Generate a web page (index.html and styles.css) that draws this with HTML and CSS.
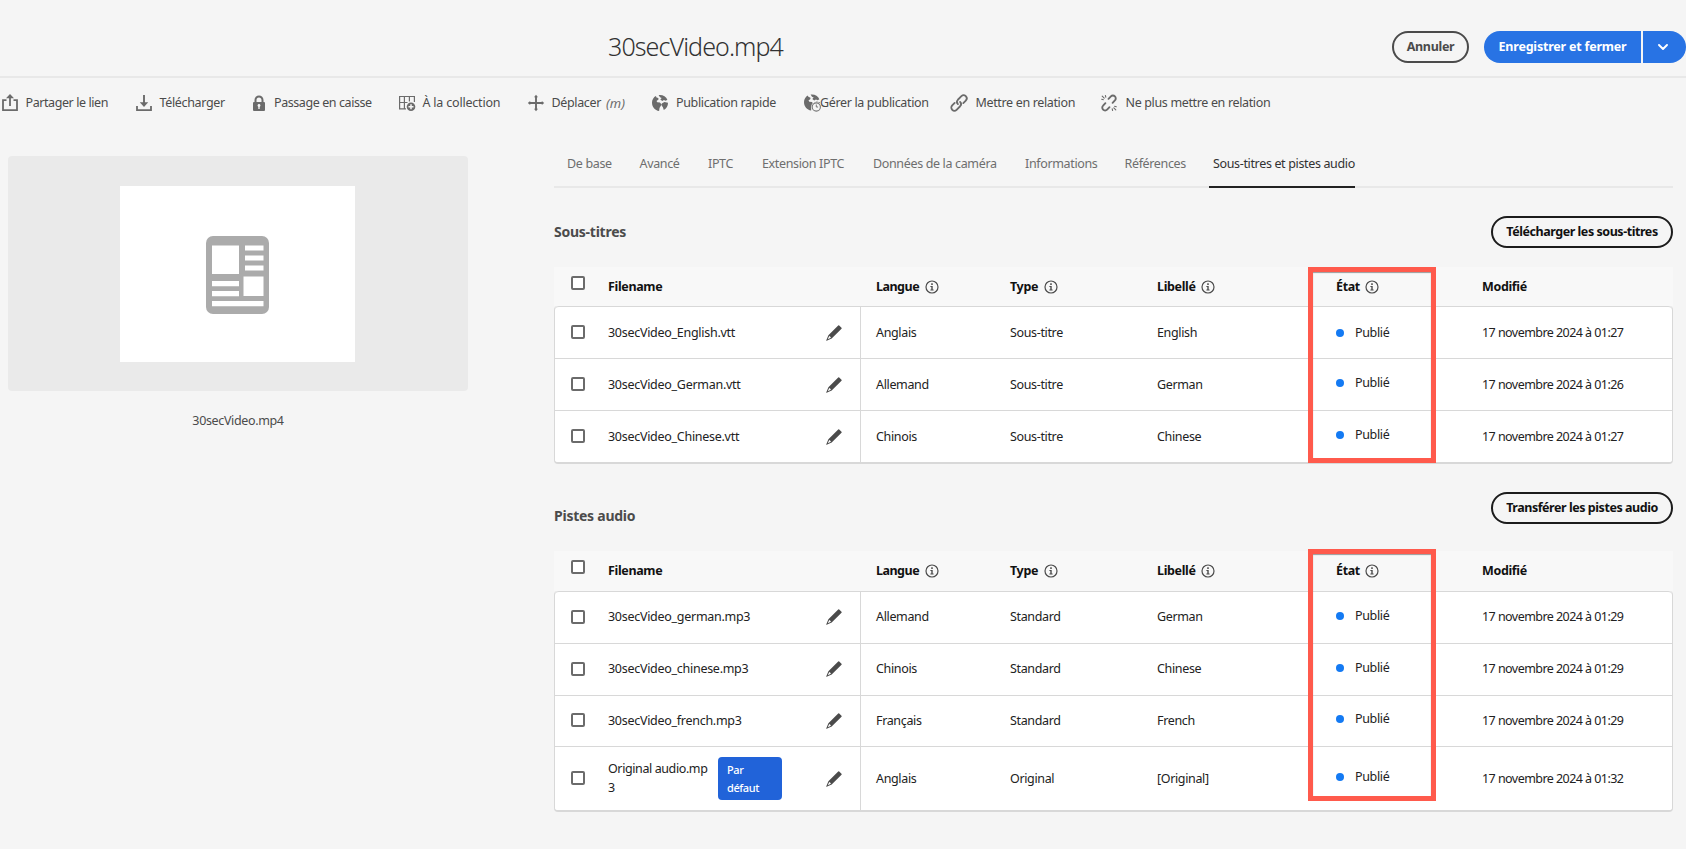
FILE: index.html
```html
<!DOCTYPE html>
<html lang="fr">
<head>
<meta charset="utf-8">
<title>30secVideo.mp4</title>
<link rel="stylesheet" href="styles.css">
</head>
<body>
<svg class="defs" aria-hidden="true">
  <symbol id="info" viewBox="0 0 14 14"><circle cx="7" cy="7" r="6" fill="none" stroke="#4b4b4b" stroke-width="1.2"/><rect x="6.1" y="3.2" width="1.8" height="1.7" rx=".6" fill="#4b4b4b"/><path d="M5.4 6.1h2.3v3.4h.9v1H5.4v-1h.9V7.1h-.9z" fill="#4b4b4b"/></symbol>
  <symbol id="pencil" viewBox="0 0 16 16"><path fill="#4b4b4b" d="M12.2.5q.5-.5 1 0l2.3 2.3q.5.5 0 1L5.7 13.5.6 15.8q-.5.1-.4-.4l2.2-5.1zM3.2 11.1 1.8 14.2l3.1-1.4q-.2-1.3-1.7-1.7z"/></symbol>
  <symbol id="earth" viewBox="0 0 18 18"><path fill="#6b6b6b" d="M1 8.500C1 5.600 2.600 3 4.900 1.900l.6 1.700 1.800.3.200 1.600-2 1.500.8 1.200 2.600.3 1.700 1.900-1.200 2.200-.9 1.500-.4 2.900C4 16.500 1 13 1 8.500zM7.600 1.100C11.600.500 15 2.600 16.400 5.700l-1.700 1-1.800-.6-1.600 1-2-1.500 1.400-1.500-1.700-.8zM10.800 9.400l2.600-1.400 3.600.8c.1 3-1.500 5.800-4.200 7.200l-.9-2.800-1.300-1.600z"/></symbol>
</svg>

<header class="header">
  <h1 class="title">30secVideo.mp4</h1>
  <div class="actions">
    <button class="btn btn-cancel">Annuler</button>
    <div class="split">
      <button class="split-main">Enregistrer et fermer</button>
      <button class="split-more" aria-label="Plus"><svg width="10" height="7" viewBox="0 0 10 7"><path d="M1 1l4 4 4-4" fill="none" stroke="#fff" stroke-width="1.9" stroke-linecap="round" stroke-linejoin="round"/></svg></button>
    </div>
  </div>
</header>

<nav class="toolbar">
  <a class="tool share"><svg viewBox="0 0 18 18"><path d="M5.5 6.2H2v10h14v-10h-3.5" fill="none" stroke="#6b6b6b" stroke-width="1.8"/><path d="M9 2v10" stroke="#6b6b6b" stroke-width="1.8"/><path d="M9 0l4 4.3H5z" fill="#6b6b6b"/></svg><span>Partager le lien</span></a>
  <a class="tool download"><svg viewBox="0 0 18 18"><path d="M2 12v4.2h14V12" fill="none" stroke="#6b6b6b" stroke-width="1.8"/><path d="M9 1v8" stroke="#6b6b6b" stroke-width="1.9"/><path d="M9 13L4.8 8.3h8.4z" fill="#6b6b6b"/></svg><span>Télécharger</span></a>
  <a class="tool lock"><svg viewBox="0 0 18 18"><path d="M5.5 9V6a3.5 3.6 0 0 1 7 0v3" fill="none" stroke="#6b6b6b" stroke-width="2"/><rect x="3" y="8" width="12" height="9" rx="1" fill="#6b6b6b"/><circle cx="9" cy="11.5" r="1.4" fill="#f5f5f5"/><path d="M8.3 12h1.4v3H8.3z" fill="#f5f5f5"/></svg><span>Passage en caisse</span></a>
  <a class="tool collection"><svg viewBox="0 0 18 18"><path d="M8 14.8H1.6V2.5h14.8V8M1.6 8.5h8M6.4 2.5v12.3M11.4 2.5v5" fill="none" stroke="#6b6b6b" stroke-width="1.2"/><circle cx="13" cy="12.7" r="5.2" fill="#f5f5f5"/><circle cx="13" cy="12.7" r="4.3" fill="#6b6b6b"/><path d="M13 10.2v5M10.5 12.7h5" stroke="#f5f5f5" stroke-width="1.5"/></svg><span>À la collection</span></a>
  <a class="tool move"><svg viewBox="0 0 18 18"><path d="M9 2v14M2 9h14" stroke="#6b6b6b" stroke-width="1.9"/><path d="M9 .8l2 2.4H7zM9 17.2l2-2.4H7zM.8 9l2.4-2v4zM17.2 9l-2.4-2v4z" fill="#6b6b6b"/></svg><span>Déplacer</span><i>(m)</i></a>
  <a class="tool globe"><svg viewBox="0 0 18 18"><use href="#earth"/></svg><span>Publication rapide</span></a>
  <a class="tool globe-clock"><svg viewBox="0 0 18 18"><use href="#earth" x="0" y="-.5"/><circle cx="13.3" cy="13" r="5.2" fill="#f5f5f5"/><circle cx="13.3" cy="13" r="4.1" fill="#f5f5f5" stroke="#777" stroke-width="1.1"/><path d="M13.300 10.500V13h1.800" fill="none" stroke="#777"/></svg><span>Gérer la publication</span></a>
  <a class="tool link"><svg viewBox="0 0 18 18"><g transform="rotate(-45 9 9)" fill="none" stroke="#6b6b6b" stroke-width="1.8" stroke-linecap="round"><path d="M6 5.9H2.5a3.1 3.1 0 0 0 0 6.2h5a3.1 3.1 0 0 0 3-3.1M12 12.1h3.500a3.100 3.100 0 0 0 0-6.200h-5a3.100 3.100 0 0 0-3 3.100"/></g></svg><span>Mettre en relation</span></a>
  <a class="tool unlink"><svg viewBox="0 0 18 18"><g fill="none" stroke="#6b6b6b" stroke-width="1.9" stroke-linecap="round"><path d="M8.5 4.8l2.4-2.4a2.800 2.800 0 0 1 4 0 2.800 2.800 0 0 1 0 4L12.600 8.800M9.500 13.200l-2.400 2.400a2.800 2.800 0 0 1-4 0 2.800 2.800 0 0 1 0-4L5.400 9.200"/><path d="M1.700 5.200l1.700.5M2.200 2.200l2 2M5.400 1.500l.4 1.700M12.200 14.800l.4 1.700M13.800 13.800l2 2M14.600 12.300l1.700.5" stroke-width="1.1"/></g></svg><span>Ne plus mettre en relation</span></a>
</nav>

<main class="main">
  <aside class="preview">
    <div class="preview-card"><div class="preview-page">
      <svg width="63" height="78" viewBox="0 0 63 78"><rect width="63" height="78" rx="7" fill="#ababab"/><path fill="#fff" d="M6 9.5h27v28.5H6zM39 9.5h18.5v5H39zM39 19.5h18.5v5H39zM39 29.5h18.5v5H39zM37.5 40.5h20v19.5h-20zM6 45h27v5.3H6zM6 55h27v5.3H6zM6 65h51.5v5.3H6z"/></svg>
    </div></div>
    <p class="caption">30secVideo.mp4</p>
  </aside>

  <section class="content">
    <nav class="tabs">
      <a>De base</a><a>Avancé</a><a>IPTC</a><a>Extension IPTC</a><a>Données de la caméra</a><a>Informations</a><a>Références</a><a class="active">Sous-titres et pistes audio</a>
    </nav>

    <div class="section-head"><h2>Sous-titres</h2><button class="btn btn-upload">Télécharger les sous-titres</button></div>
    <div class="table">
      <div class="row thead">
        <span class="check"><i class="box"></i></span><span>Filename</span>
        <span class="lang">Langue<svg class="info"><use href="#info"/></svg></span><span>Type<svg class="info"><use href="#info"/></svg></span><span>Libellé<svg class="info"><use href="#info"/></svg></span><span>État<svg class="info"><use href="#info"/></svg></span><span>Modifié</span>
      </div>
      <div class="tbody">
        <div class="row"><span class="check"><i class="box"></i></span><span class="name">30secVideo_English.vtt<svg class="pencil"><use href="#pencil"/></svg></span><span class="lang">Anglais</span><span>Sous-titre</span><span>English</span><span class="state"><i class="dot"></i>Publié</span><span class="date">17 novembre 2024 à 01:27</span></div>
        <div class="row"><span class="check"><i class="box"></i></span><span class="name">30secVideo_German.vtt<svg class="pencil"><use href="#pencil"/></svg></span><span class="lang">Allemand</span><span>Sous-titre</span><span>German</span><span class="state raised"><i class="dot"></i>Publié</span><span class="date">17 novembre 2024 à 01:26</span></div>
        <div class="row"><span class="check"><i class="box"></i></span><span class="name">30secVideo_Chinese.vtt<svg class="pencil"><use href="#pencil"/></svg></span><span class="lang">Chinois</span><span>Sous-titre</span><span>Chinese</span><span class="state raised"><i class="dot"></i>Publié</span><span class="date">17 novembre 2024 à 01:27</span></div>
      </div>
      <div class="highlight"></div>
    </div>

    <div class="section-head audio-head"><h2>Pistes audio</h2><button class="btn btn-upload">Transférer les pistes audio</button></div>
    <div class="table audio">
      <div class="row thead">
        <span class="check"><i class="box"></i></span><span>Filename</span>
        <span class="lang">Langue<svg class="info"><use href="#info"/></svg></span><span>Type<svg class="info"><use href="#info"/></svg></span><span>Libellé<svg class="info"><use href="#info"/></svg></span><span>État<svg class="info"><use href="#info"/></svg></span><span>Modifié</span>
      </div>
      <div class="tbody">
        <div class="row"><span class="check"><i class="box"></i></span><span class="name">30secVideo_german.mp3<svg class="pencil"><use href="#pencil"/></svg></span><span class="lang">Allemand</span><span>Standard</span><span>German</span><span class="state raised"><i class="dot"></i>Publié</span><span class="date">17 novembre 2024 à 01:29</span></div>
        <div class="row"><span class="check"><i class="box"></i></span><span class="name">30secVideo_chinese.mp3<svg class="pencil"><use href="#pencil"/></svg></span><span class="lang">Chinois</span><span>Standard</span><span>Chinese</span><span class="state raised"><i class="dot"></i>Publié</span><span class="date">17 novembre 2024 à 01:29</span></div>
        <div class="row"><span class="check"><i class="box"></i></span><span class="name">30secVideo_french.mp3<svg class="pencil"><use href="#pencil"/></svg></span><span class="lang">Français</span><span>Standard</span><span>French</span><span class="state raised"><i class="dot"></i>Publié</span><span class="date">17 novembre 2024 à 01:29</span></div>
        <div class="row tall"><span class="check"><i class="box"></i></span><span class="name"><span class="wrapped">Original audio.mp<br>3</span><b class="badge">Par<br>défaut</b><svg class="pencil"><use href="#pencil"/></svg></span><span class="lang">Anglais</span><span>Original</span><span>[Original]</span><span class="state raised"><i class="dot"></i>Publié</span><span class="date">17 novembre 2024 à 01:32</span></div>
      </div>
      <div class="highlight"></div>
    </div>
  </section>
</main>
</body>
</html>
```
FILE: styles.css
```css
* { box-sizing: border-box; }
body {
  margin: 0; height: 849px; overflow: hidden; background: #f5f5f5; color: #222;
  font: 12.5px/18px "Noto Sans", "Open Sans", sans-serif; letter-spacing: -0.35px; white-space: nowrap;
}
h1, h2, p { margin: 0; }
button { font: inherit; letter-spacing: inherit; padding: 0; }
.defs { position: absolute; width: 0; height: 0; }

.header { display: flex; justify-content: space-between; height: 78px; padding-left: 608px; border-bottom: 2px solid #e8e8e8; }
.title { margin-top: 29px; font-size: 25px; line-height: 34px; font-weight: 300; letter-spacing: -0.9px; color: #323232; }
.actions { display: flex; gap: 15px; margin-top: 31px; height: 32px; }
.btn { height: 32px; border: 2px solid #1c1c1c; border-radius: 16px; background: transparent; color: #111; font-weight: 700; }
.btn-cancel { width: 77px; border-color: #4b4b4b; color: #4b4b4b; letter-spacing: -0.3px; }
.split { display: flex; gap: 2px; }
.split button { border: 0; background: #2873e4; color: #fff; font-weight: 700; letter-spacing: -0.2px; }
.split-main { width: 157px; border-radius: 16px 0 0 16px; }
.split .split-more { width: 43px; padding-right: 3px; border-radius: 0 16px 16px 0; }

.toolbar { display: grid; grid-template-columns: 134px 115px 148px 129px 123.5px 151px 148px 150px 220px; height: 49px; color: #4b4b4b; padding-left: 1px; }
.tool { display: flex; align-items: center; }
.tool svg { flex: none; width: 18px; height: 18px; margin-right: 6.5px; overflow: visible; }
.tool i { margin-left: 5px; font-size: 13px; letter-spacing: 0; color: #6b6b6b; }
.share, .lock { letter-spacing: -0.42px; }
.lock svg { margin-right: 6px; }
.collection { letter-spacing: -0.2px; }
.globe svg { margin-right: 7.5px; }
.globe-clock svg { margin: 0 -1px 0 1px; }
.globe-clock span { margin-left: 0.5px; }
.link svg, .unlink svg { margin-right: 8px; }

.main { display: flex; }
.preview { width: 460px; margin: 29px 86px 0 8px; }
.preview-card { display: flex; align-items: center; justify-content: center; height: 235px; border-radius: 4px; background: #eaeaea; }
.preview-page { display: flex; align-items: center; justify-content: center; width: 235px; height: 176px; margin-right: 1px; padding-top: 2px; background: #fff; }
.caption { margin-top: 21px; text-align: center; color: #4b4b4b; }

.content { width: 1119px; }
.tabs { display: grid; grid-template-columns: 72.5px 68.5px 54px 111px 152px 99.5px 84.5px 146px; height: 61px; padding: 28px 0 0 13px; border-bottom: 2px solid #e8e8e8; color: #6e6e6e; }
.tabs a { height: 33px; }
.tabs .active { padding-left: 4px; border-bottom: 2px solid #222; color: #323232; }

.section-head { display: flex; justify-content: space-between; height: 79px; padding-top: 28px; }
.section-head h2 { font-size: 14px; line-height: 32px; letter-spacing: -0.25px; color: #4b4b4b; }
.btn-upload { width: 182px; letter-spacing: -0.45px; }
.audio-head { height: 87px; }
.audio-head h2 { margin-top: 8px; }

.table { position: relative; }
.row { display: grid; grid-template-columns: 53px 252px 150px 147px 179px 146px 1fr; }
.row > span { display: flex; align-items: center; }
.thead { height: 39px; padding-left: 1px; background: #f8f8f8; font-weight: 700; color: #111; }
.audio .thead { height: 40px; }
.thead .check { padding-bottom: 8px; }
.lang { padding-left: 16px; }
.thead .lang { letter-spacing: -0.5px; }
.check { padding-left: 16px; }
.box { width: 14px; height: 14px; border: 2px solid #6b6b6b; border-radius: 2px; background: #fff; }
.tbody .check { padding-bottom: 1px; }
.info { width: 14px; height: 14px; margin-left: 5.5px; }
.tbody { border: 1px solid #d8d8d8; border-width: 0 1px 2px; border-radius: 4px; background: #fff; }
.tbody .row { height: 52px; border-top: 1px solid #d8d8d8; }
.audio .tbody .row { height: 51.8px; }
.audio .tbody .tall { height: 64px; }
.tbody .row:first-child { border-radius: 4px 4px 0 0; }
.tbody .lang { padding-left: 15px; border-left: 1px solid #d8d8d8; }
.tbody .name { padding-right: 18px; letter-spacing: -0.28px; }
.pencil { width: 16px; height: 16px; margin-left: auto; }
.wrapped { width: 110px; line-height: 18.5px; letter-spacing: -0.4px; }
.badge { width: 63.5px; height: 43px; padding: 4px 9px; border-radius: 4px; background: #2163d9; color: #fff; font-size: 11px; line-height: 17.5px; font-weight: 500; letter-spacing: -0.4px; }
.dot { width: 8px; height: 8px; margin-right: 11px; border-radius: 50%; background: #147af3; }
.raised { padding-bottom: 4px; }
.audio .raised { padding-bottom: 3px; }
.date { letter-spacing: -0.55px; }

/* Callout frame around the status column */
.highlight { position: absolute; left: 754px; top: 0; width: 128px; height: 196px; border: 5px solid #ff5a4c; box-shadow: inset 0 1px 1px #999; }
.audio .highlight { top: -2px; height: 252px; }
```
